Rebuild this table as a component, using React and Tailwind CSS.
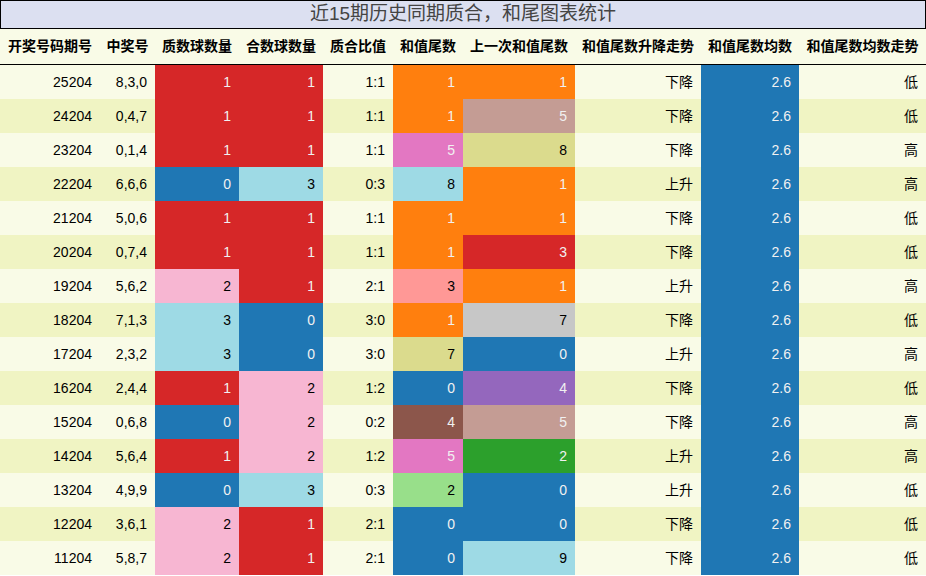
import React from "react";

const C = {
  R: ["bg-[#d62728]", "text-[#f1f1f1]"],
  B: ["bg-[#1f77b4]", "text-[#f1f1f1]"],
  O: ["bg-[#ff7f0e]", "text-[#f1f1f1]"],
  c: ["bg-[#9edae5]", "text-[#000000]"],
  p: ["bg-[#f7b6d2]", "text-[#000000]"],
  P: ["bg-[#e377c2]", "text-[#f1f1f1]"],
  b: ["bg-[#c49c94]", "text-[#f1f1f1]"],
  y: ["bg-[#dbdb8d]", "text-[#000000]"],
  s: ["bg-[#ff9896]", "text-[#000000]"],
  g: ["bg-[#c7c7c7]", "text-[#000000]"],
  V: ["bg-[#9467bd]", "text-[#f1f1f1]"],
  N: ["bg-[#8c564b]", "text-[#f1f1f1]"],
  G: ["bg-[#2ca02c]", "text-[#f1f1f1]"],
  l: ["bg-[#98df8a]", "text-[#000000]"],
};

const rows = [
  ["25204", "8,3,0", "1", "R", "1", "R", "1:1", "1", "O", "1", "O", "下降", "低"],
  ["24204", "0,4,7", "1", "R", "1", "R", "1:1", "1", "O", "5", "b", "下降", "低"],
  ["23204", "0,1,4", "1", "R", "1", "R", "1:1", "5", "P", "8", "y", "下降", "高"],
  ["22204", "6,6,6", "0", "B", "3", "c", "0:3", "8", "c", "1", "O", "上升", "高"],
  ["21204", "5,0,6", "1", "R", "1", "R", "1:1", "1", "O", "1", "O", "下降", "低"],
  ["20204", "0,7,4", "1", "R", "1", "R", "1:1", "1", "O", "3", "R", "下降", "低"],
  ["19204", "5,6,2", "2", "p", "1", "R", "2:1", "3", "s", "1", "O", "上升", "高"],
  ["18204", "7,1,3", "3", "c", "0", "B", "3:0", "1", "O", "7", "g", "下降", "低"],
  ["17204", "2,3,2", "3", "c", "0", "B", "3:0", "7", "y", "0", "B", "上升", "高"],
  ["16204", "2,4,4", "1", "R", "2", "p", "1:2", "0", "B", "4", "V", "下降", "低"],
  ["15204", "0,6,8", "0", "B", "2", "p", "0:2", "4", "N", "5", "b", "下降", "高"],
  ["14204", "5,6,4", "1", "R", "2", "p", "1:2", "5", "P", "2", "G", "上升", "高"],
  ["13204", "4,9,9", "0", "B", "3", "c", "0:3", "2", "l", "0", "B", "上升", "低"],
  ["12204", "3,6,1", "2", "p", "1", "R", "2:1", "0", "B", "0", "B", "下降", "低"],
  ["11204", "5,8,7", "2", "p", "1", "R", "2:1", "0", "B", "9", "c", "下降", "低"],
];

const headers = [
  "开奖号码期号",
  "中奖号",
  "质数球数量",
  "合数球数量",
  "质合比值",
  "和值尾数",
  "上一次和值尾数",
  "和值尾数升降走势",
  "和值尾数均数",
  "和值尾数均数走势",
];

const grid =
  "grid grid-cols-[100px_55px_84px_84px_70px_70px_112px_126px_98px_127px]";

function Cell({ children, cls }) {
  return (
    <div className={`h-[34px] flex items-center justify-end pr-2 text-[14px] ${cls}`}>
      {children}
    </div>
  );
}

export default function App() {
  return (
    <div
      className="w-[926px] h-[576px] bg-white overflow-hidden"
      style={{ fontFamily: '"Liberation Sans", "Noto Sans CJK SC", sans-serif' }}
    >
      <div className="h-[29px] border border-black bg-[#dce0f1] flex items-center justify-center text-[19px] text-[#444444]">
        近15期历史同期质合，和尾图表统计
      </div>
      <div className={`${grid} h-[36px] bg-[#f9fbe7] border-b border-black`}>
        {headers.map((h) => (
          <div
            key={h}
            className="flex items-center justify-center font-bold text-[14px] text-black whitespace-nowrap"
          >
            {h}
          </div>
        ))}
      </div>
      {rows.map((r, i) => {
        const rowBg = i % 2 === 0 ? "bg-[#f9fbe7]" : "bg-[#f0f4c3]";
        const plain = `${rowBg} text-black`;
        const col = (k) => `${C[k][0]} ${C[k][1]}`;
        return (
          <div key={r[0]} className={grid}>
            <Cell cls={plain}>{r[0]}</Cell>
            <Cell cls={plain}>{r[1]}</Cell>
            <Cell cls={col(r[3])}>{r[2]}</Cell>
            <Cell cls={col(r[5])}>{r[4]}</Cell>
            <Cell cls={plain}>{r[6]}</Cell>
            <Cell cls={col(r[8])}>{r[7]}</Cell>
            <Cell cls={col(r[10])}>{r[9]}</Cell>
            <Cell cls={plain}>{r[11]}</Cell>
            <Cell cls={col("B")}>2.6</Cell>
            <Cell cls={plain}>{r[12]}</Cell>
          </div>
        );
      })}
    </div>
  );
}
